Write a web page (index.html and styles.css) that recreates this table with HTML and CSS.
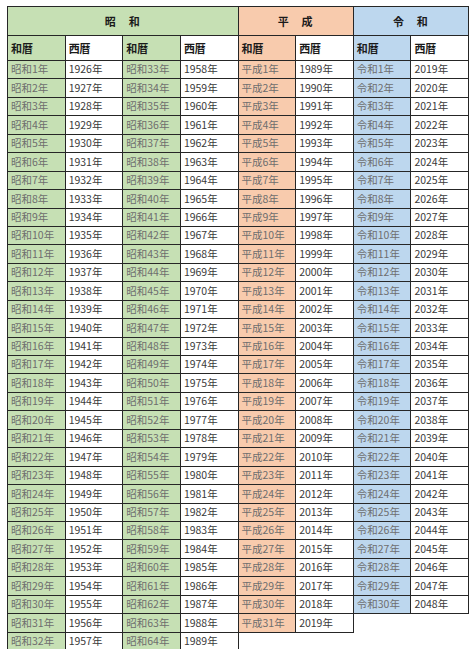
FILE: index.html
```html
<!DOCTYPE html>
<html lang="ja">
<head>
<meta charset="utf-8">
<title>和暦西暦早見表</title>
<link rel="stylesheet" href="styles.css">
</head>
<body>
<table class="era">
<colgroup><col><col><col><col><col><col><col><col></colgroup>
<tr class="head">
<th colspan="4" class="g">昭　和</th>
<th colspan="2" class="o">平　成</th>
<th colspan="2" class="b">令　和</th>
</tr>
<tr class="sub">
<th class="g">和暦</th><th>西暦</th><th class="g">和暦</th><th>西暦</th>
<th class="o">和暦</th><th>西暦</th><th class="b">和暦</th><th>西暦</th>
</tr>
<tr><td class="g w">昭和1年</td><td>1926年</td><td class="g w">昭和33年</td><td>1958年</td><td class="o w">平成1年</td><td>1989年</td><td class="b w">令和1年</td><td>2019年</td></tr>
<tr><td class="g w">昭和2年</td><td>1927年</td><td class="g w">昭和34年</td><td>1959年</td><td class="o w">平成2年</td><td>1990年</td><td class="b w">令和2年</td><td>2020年</td></tr>
<tr><td class="g w">昭和3年</td><td>1928年</td><td class="g w">昭和35年</td><td>1960年</td><td class="o w">平成3年</td><td>1991年</td><td class="b w">令和3年</td><td>2021年</td></tr>
<tr><td class="g w">昭和4年</td><td>1929年</td><td class="g w">昭和36年</td><td>1961年</td><td class="o w">平成4年</td><td>1992年</td><td class="b w">令和4年</td><td>2022年</td></tr>
<tr><td class="g w">昭和5年</td><td>1930年</td><td class="g w">昭和37年</td><td>1962年</td><td class="o w">平成5年</td><td>1993年</td><td class="b w">令和5年</td><td>2023年</td></tr>
<tr><td class="g w">昭和6年</td><td>1931年</td><td class="g w">昭和38年</td><td>1963年</td><td class="o w">平成6年</td><td>1994年</td><td class="b w">令和6年</td><td>2024年</td></tr>
<tr><td class="g w">昭和7年</td><td>1932年</td><td class="g w">昭和39年</td><td>1964年</td><td class="o w">平成7年</td><td>1995年</td><td class="b w">令和7年</td><td>2025年</td></tr>
<tr><td class="g w">昭和8年</td><td>1933年</td><td class="g w">昭和40年</td><td>1965年</td><td class="o w">平成8年</td><td>1996年</td><td class="b w">令和8年</td><td>2026年</td></tr>
<tr><td class="g w">昭和9年</td><td>1934年</td><td class="g w">昭和41年</td><td>1966年</td><td class="o w">平成9年</td><td>1997年</td><td class="b w">令和9年</td><td>2027年</td></tr>
<tr><td class="g w">昭和10年</td><td>1935年</td><td class="g w">昭和42年</td><td>1967年</td><td class="o w">平成10年</td><td>1998年</td><td class="b w">令和10年</td><td>2028年</td></tr>
<tr><td class="g w">昭和11年</td><td>1936年</td><td class="g w">昭和43年</td><td>1968年</td><td class="o w">平成11年</td><td>1999年</td><td class="b w">令和11年</td><td>2029年</td></tr>
<tr><td class="g w">昭和12年</td><td>1937年</td><td class="g w">昭和44年</td><td>1969年</td><td class="o w">平成12年</td><td>2000年</td><td class="b w">令和12年</td><td>2030年</td></tr>
<tr><td class="g w">昭和13年</td><td>1938年</td><td class="g w">昭和45年</td><td>1970年</td><td class="o w">平成13年</td><td>2001年</td><td class="b w">令和13年</td><td>2031年</td></tr>
<tr><td class="g w">昭和14年</td><td>1939年</td><td class="g w">昭和46年</td><td>1971年</td><td class="o w">平成14年</td><td>2002年</td><td class="b w">令和14年</td><td>2032年</td></tr>
<tr><td class="g w">昭和15年</td><td>1940年</td><td class="g w">昭和47年</td><td>1972年</td><td class="o w">平成15年</td><td>2003年</td><td class="b w">令和15年</td><td>2033年</td></tr>
<tr><td class="g w">昭和16年</td><td>1941年</td><td class="g w">昭和48年</td><td>1973年</td><td class="o w">平成16年</td><td>2004年</td><td class="b w">令和16年</td><td>2034年</td></tr>
<tr><td class="g w">昭和17年</td><td>1942年</td><td class="g w">昭和49年</td><td>1974年</td><td class="o w">平成17年</td><td>2005年</td><td class="b w">令和17年</td><td>2035年</td></tr>
<tr><td class="g w">昭和18年</td><td>1943年</td><td class="g w">昭和50年</td><td>1975年</td><td class="o w">平成18年</td><td>2006年</td><td class="b w">令和18年</td><td>2036年</td></tr>
<tr><td class="g w">昭和19年</td><td>1944年</td><td class="g w">昭和51年</td><td>1976年</td><td class="o w">平成19年</td><td>2007年</td><td class="b w">令和19年</td><td>2037年</td></tr>
<tr><td class="g w">昭和20年</td><td>1945年</td><td class="g w">昭和52年</td><td>1977年</td><td class="o w">平成20年</td><td>2008年</td><td class="b w">令和20年</td><td>2038年</td></tr>
<tr><td class="g w">昭和21年</td><td>1946年</td><td class="g w">昭和53年</td><td>1978年</td><td class="o w">平成21年</td><td>2009年</td><td class="b w">令和21年</td><td>2039年</td></tr>
<tr><td class="g w">昭和22年</td><td>1947年</td><td class="g w">昭和54年</td><td>1979年</td><td class="o w">平成22年</td><td>2010年</td><td class="b w">令和22年</td><td>2040年</td></tr>
<tr><td class="g w">昭和23年</td><td>1948年</td><td class="g w">昭和55年</td><td>1980年</td><td class="o w">平成23年</td><td>2011年</td><td class="b w">令和23年</td><td>2041年</td></tr>
<tr><td class="g w">昭和24年</td><td>1949年</td><td class="g w">昭和56年</td><td>1981年</td><td class="o w">平成24年</td><td>2012年</td><td class="b w">令和24年</td><td>2042年</td></tr>
<tr><td class="g w">昭和25年</td><td>1950年</td><td class="g w">昭和57年</td><td>1982年</td><td class="o w">平成25年</td><td>2013年</td><td class="b w">令和25年</td><td>2043年</td></tr>
<tr><td class="g w">昭和26年</td><td>1951年</td><td class="g w">昭和58年</td><td>1983年</td><td class="o w">平成26年</td><td>2014年</td><td class="b w">令和26年</td><td>2044年</td></tr>
<tr><td class="g w">昭和27年</td><td>1952年</td><td class="g w">昭和59年</td><td>1984年</td><td class="o w">平成27年</td><td>2015年</td><td class="b w">令和27年</td><td>2045年</td></tr>
<tr><td class="g w">昭和28年</td><td>1953年</td><td class="g w">昭和60年</td><td>1985年</td><td class="o w">平成28年</td><td>2016年</td><td class="b w">令和28年</td><td>2046年</td></tr>
<tr><td class="g w">昭和29年</td><td>1954年</td><td class="g w">昭和61年</td><td>1986年</td><td class="o w">平成29年</td><td>2017年</td><td class="b w">令和29年</td><td>2047年</td></tr>
<tr><td class="g w">昭和30年</td><td>1955年</td><td class="g w">昭和62年</td><td>1987年</td><td class="o w">平成30年</td><td>2018年</td><td class="b w">令和30年</td><td>2048年</td></tr>
<tr><td class="g w">昭和31年</td><td>1956年</td><td class="g w">昭和63年</td><td>1988年</td><td class="o w">平成31年</td><td>2019年</td><td class="empty"></td><td class="empty"></td></tr>
<tr><td class="g w">昭和32年</td><td>1957年</td><td class="g w">昭和64年</td><td>1989年</td><td class="empty"></td><td class="empty"></td><td class="empty"></td><td class="empty"></td></tr>
</table>
</body>
</html>
```
FILE: styles.css
```css
html, body {
  margin: 0;
  padding: 0;
  background: #ffffff;
}
body {
  padding: 6px 0 0 7px;
  font-family: "Noto Sans CJK JP", "Noto Sans", sans-serif;
}
.era {
  border-collapse: collapse;
  table-layout: fixed;
  width: 462px;
}
.era col {
  width: 57.6px;
}
.era th,
.era td {
  border: 1px solid #262626;
  padding: 0 0 0 3px;
  text-align: left;
  vertical-align: middle;
  white-space: nowrap;
  overflow: hidden;
  line-height: 1;
  font-size: 10.5px;
}
.era td {
  color: #3a3a3a;
  height: 17.45px;
}
.era td.w {
  color: #6e6e6e;
}
.era td.empty {
  border: none;
  background: transparent;
}
.head th {
  height: 28px;
  text-align: center;
  font-weight: 700;
  font-size: 11px;
  color: #1a1a1a;
  padding: 0;
  letter-spacing: 1px;
}
.sub th {
  height: 24px;
  font-weight: 700;
  font-size: 11px;
  color: #1a1a1a;
}
.g { background: #c6e0b4; }
.o { background: #f8cbad; }
.b { background: #bdd7ee; }
```
